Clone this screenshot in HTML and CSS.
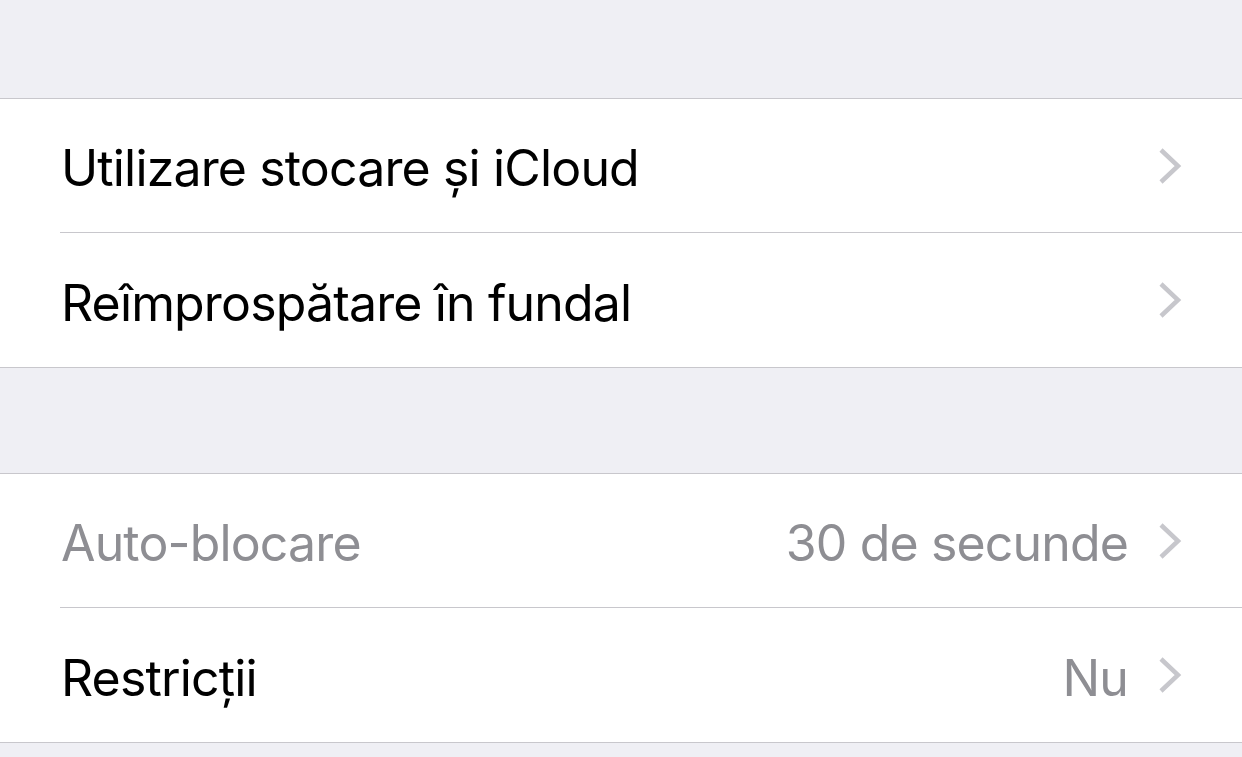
FILE: index.html
```html
<!DOCTYPE html>
<html lang="ro">
<head>
<meta charset="utf-8">
<link rel="stylesheet" href="styles.css">
</head>
<body>
<div class="gap gap-top"></div>
<section class="group">
  <div class="row sep">
    <span class="label">Utilizare stocare și iCloud</span>
    <span class="right"><svg class="chev" viewBox="0 0 24 38"><path d="M3 3 L20 19 L3 35"/></svg></span>
  </div>
  <div class="row">
    <span class="label">Reîmprospătare în fundal</span>
    <span class="right"><svg class="chev" viewBox="0 0 24 38"><path d="M3 3 L20 19 L3 35"/></svg></span>
  </div>
</section>
<div class="gap gap-mid"></div>
<section class="group">
  <div class="row sep">
    <span class="label disabled">Auto-blocare</span>
    <span class="right"><span class="value">30 de secunde</span><svg class="chev" viewBox="0 0 24 38"><path d="M3 3 L20 19 L3 35"/></svg></span>
  </div>
  <div class="row">
    <span class="label">Restricții</span>
    <span class="right"><span class="value">Nu</span><svg class="chev" viewBox="0 0 24 38"><path d="M3 3 L20 19 L3 35"/></svg></span>
  </div>
</section>
<div class="gap gap-bottom"></div>
</body>
</html>
```

FILE: styles.css
```css
html, body {
  margin: 0;
  padding: 0;
  background: #efeff4;
  font-family: Inter, "Noto Sans", sans-serif;
  width: 1242px;
  height: 757px;
  overflow: hidden;
}
.gap-top { height: 98px; }
.gap-mid { height: 105px; }
.gap-bottom { height: 20px; }
.group {
  background: #fff;
  border-top: 1px solid #c8c7cc;
  border-bottom: 1px solid #c8c7cc;
  padding-left: 60px;
}
.row {
  height: 134px;
  box-sizing: border-box;
  display: flex;
  align-items: center;
  justify-content: space-between;
  padding-right: 60px;
}
.row.sep { border-bottom: 1px solid #c8c7cc; }
.label {
  font-size: 50px;
  color: #000;
  letter-spacing: -0.85px;
  padding-left: 1px;
  padding-top: 5px;
}
.label.disabled { color: #8e8e93; }
.right {
  display: flex;
  align-items: center;
  gap: 30px;
}
.value {
  font-size: 50px;
  color: #8e8e93;
  letter-spacing: -0.85px;
  padding-top: 5px;
}
.chev {
  width: 24px;
  height: 38px;
  display: block;
}
.chev path {
  fill: none;
  stroke: #c7c7cc;
  stroke-width: 4.5;
  stroke-linecap: butt;
  stroke-linejoin: miter;
}
```
